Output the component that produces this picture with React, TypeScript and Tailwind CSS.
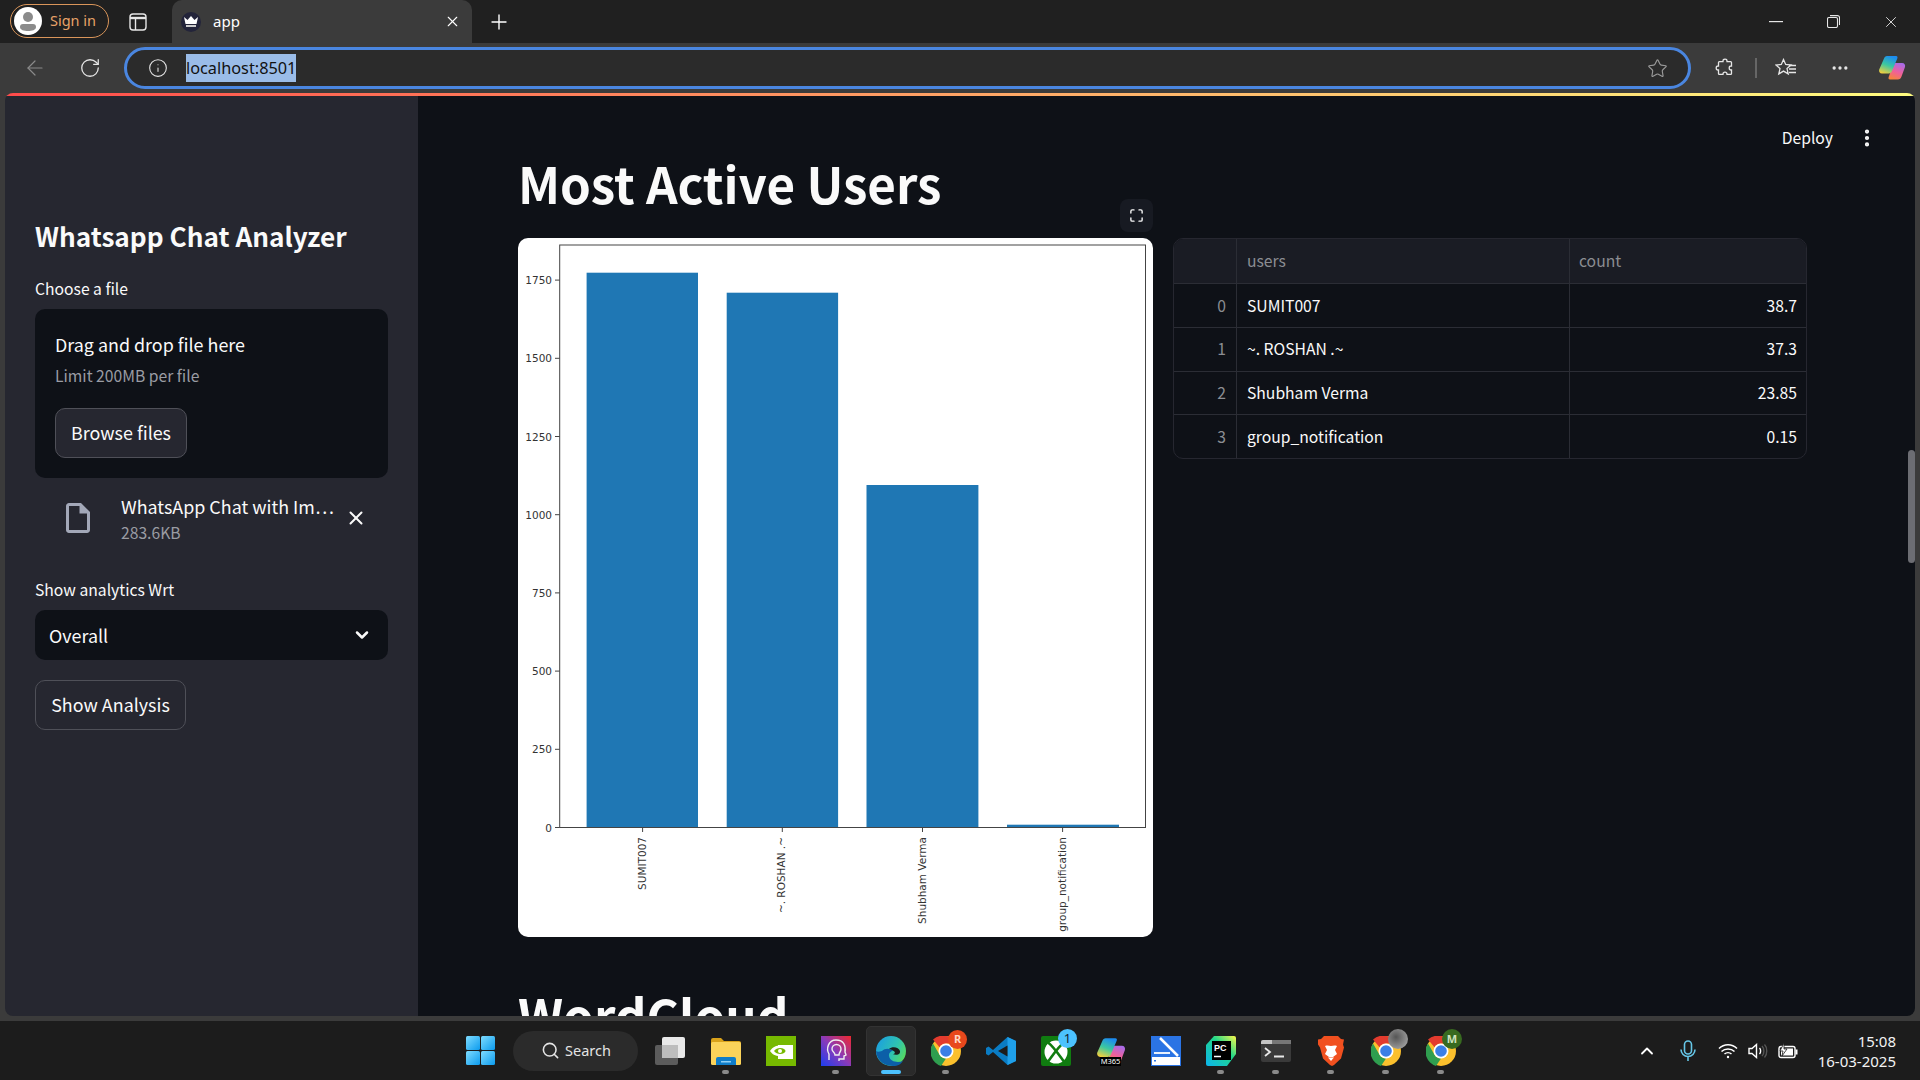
import React from "react";
import { ArrowLeft, ChevronDown, ChevronUp, Info, Maximize, MoreVertical, MoreHorizontal, Plus, RotateCw, Search, Star, X } from "lucide-react";

const appFont = "font-['Noto_Sans_CJK_SC','Noto_Sans',sans-serif]";

const rows = [
  { idx: 0, user: "SUMIT007", count: "38.7" },
  { idx: 1, user: "~. ROSHAN .~", count: "37.3" },
  { idx: 2, user: "Shubham Verma", count: "23.85" },
  { idx: 3, user: "group_notification", count: "0.15" },
];

const bars = [
  { x: 68.6, top: 34.7, w: 111.4, label: "SUMIT007", tick: 124.6 },
  { x: 208.7, top: 54.7, w: 111.4, label: "~. ROSHAN .~", tick: 264.3 },
  { x: 348.5, top: 247, w: 111.9, label: "Shubham Verma", tick: 404.5 },
  { x: 489, top: 586.7, w: 112, label: "group_notification", tick: 544.6 },
];

const yTicks = [0, 250, 500, 750, 1000, 1250, 1500, 1750];

const BarChart = () => (
  <svg width="635" height="699" viewBox="0 0 635 699" className="block">
    {bars.map((b) => (
      <rect key={b.label} x={b.x} y={b.top} width={b.w} height={589.5 - b.top} fill="#1f77b4" />
    ))}
    <rect x="41.7" y="7" width="585.8" height="582.5" fill="none" stroke="#444" strokeWidth="1" />
    {yTicks.map((t) => {
      const y = 589.5 - (t / 250) * 78.2;
      return (
        <g key={t}>
          <line x1="37" x2="41.7" y1={y} y2={y} stroke="#444" />
          <text x="34" y={y + 4} textAnchor="end" fontSize="10.5" fill="#333" fontFamily="DejaVu Sans, sans-serif">
            {t}
          </text>
        </g>
      );
    })}
    {bars.map((b) => (
      <g key={b.label}>
        <line x1={b.tick} x2={b.tick} y1="589.5" y2="594" stroke="#444" />
        <text
          transform={`translate(${b.tick + 3} 599) rotate(-90)`}
          textAnchor="end"
          fontSize="10.5"
          fill="#333"
          fontFamily="DejaVu Sans, sans-serif"
        >
          {b.label}
        </text>
      </g>
    ))}
  </svg>
);

const DataTable = () => (
  <div className="w-[634px] self-start rounded-[10px] border border-[#262730] overflow-hidden text-[15.7px] bg-[#0e1117]">
    <div className="grid grid-cols-[63px_333px_1fr] h-[44px] bg-[#1a1c24] text-[#8b8d92]">
      <div className="border-r border-[#2b2d35]" />
      <div className="border-r border-[#2b2d35] px-[10px] flex items-center">users</div>
      <div className="px-[9px] flex items-center">count</div>
    </div>
    {rows.map((r) => (
      <div key={r.idx} className="grid grid-cols-[63px_333px_1fr] h-[43.75px] border-t border-[#2b2d35] text-[#fafafa]">
        <div className="border-r border-[#2b2d35] px-[10px] flex items-center justify-end text-[#8b8d92]">{r.idx}</div>
        <div className="border-r border-[#2b2d35] px-[10px] flex items-center">{r.user}</div>
        <div className="px-[9px] flex items-center justify-end">{r.count}</div>
      </div>
    ))}
  </div>
);

const Sidebar = () => (
  <aside className="w-[413px] shrink-0 bg-[#262730] px-[30px] pt-[122px] text-[#fafafa]">
    <h2 className="text-[26.2px] leading-[36px] font-semibold whitespace-nowrap">Whatsapp Chat Analyzer</h2>
    <p className="mt-[22px] mb-[8px] text-[15.7px] leading-[25px]">Choose a file</p>
    <div className="h-[169px] rounded-[10px] bg-[#0e1117] px-[20px] pt-[21px]">
      <p className="text-[17.9px] leading-[28px]">Drag and drop file here</p>
      <p className="mt-[6px] text-[15.7px] leading-[24px] text-[#9a9ca3]">Limit 200MB per file</p>
      <button className="mt-[20px] h-[50px] w-[132px] rounded-[10px] border border-[#4f5058] bg-[#262730] pb-[2px] text-[17.9px]">
        Browse files
      </button>
    </div>
    <div className="flex items-center h-[80px] pl-[25px]">
      <svg width="36" height="36" viewBox="0 0 24 24" fill="#a3a8b8" className="shrink-0">
        <path d="M14 2H6c-1.1 0-1.99.9-1.99 2L4 20c0 1.1.89 2 1.99 2H18c1.1 0 2-.9 2-2V8l-6-6zM6 20V4h7v5h5v11H6z" />
      </svg>
      <div className="ml-[25px] w-[222px]">
        <p className="text-[17.9px] leading-[28px] whitespace-nowrap">WhatsApp Chat with Im…</p>
        <p className="text-[15.7px] leading-[25px] text-[#9a9ca3]">283.6KB</p>
      </div>
      <X size={22} strokeWidth={2.2} className="ml-[2px]" />
    </div>
    <p className="mt-[19px] mb-[8px] text-[15.7px] leading-[25px]">Show analytics Wrt</p>
    <div className="h-[50px] rounded-[10px] bg-[#0e1117] pl-[14px] pr-[16px] flex items-center justify-between text-[17.9px]">
      Overall
      <ChevronDown size={20} strokeWidth={3} />
    </div>
    <button className="mt-[20px] h-[50px] w-[151px] rounded-[10px] border border-[#4f5058] bg-[#262730] pb-[2px] text-[17.9px]">
      Show Analysis
    </button>
  </aside>
);

const MainPane = () => (
  <main className="relative flex-1 min-w-0 overflow-hidden bg-[#0e1117] pl-[100px] pt-[54px] text-[#fafafa]">
    <h1 className="text-[49.3px] leading-[66px] font-bold">Most Active Users</h1>
    <div className="mt-[22px] flex gap-[20px]">
      <div className="relative w-[635px] h-[699px] rounded-[10px] bg-white">
        <button className="absolute -top-[39px] right-0 w-[33px] h-[33px] flex items-center justify-center rounded-[8px] bg-[#171a22] text-[#fafafa]">
          <Maximize size={15} strokeWidth={2.2} />
        </button>
        <BarChart />
      </div>
      <DataTable />
    </div>
    <h1 className="mt-[45px] text-[49.3px] leading-[66px] font-bold">WordCloud</h1>
    <div className="absolute top-[30px] right-[37px] flex items-center gap-[23px] text-[15.7px]">
      <span>Deploy</span>
      <MoreVertical size={22} strokeWidth={2.6} />
    </div>
    <div className="absolute right-0 top-[354px] w-[7px] h-[113px] rounded-full bg-[#6c6d73]" />
  </main>
);

const SidebarToggleIcon = () => (
  <svg width="18" height="18" viewBox="0 0 18 18" fill="none" stroke="#e6e6e6" strokeWidth="1.4">
    <rect x="1" y="1" width="16" height="16" rx="3" />
    <path d="M1 5h16" strokeWidth="2.4" />
    <path d="M6.5 5v12" />
  </svg>
);

const PuzzleIcon = () => (
  <svg width="20" height="20" viewBox="0 0 20 20" fill="none" stroke="#e6e6e6" strokeWidth="1.3">
    <path d="M8 3c0-2.4 4-2.4 4 0v.6h3.6a1 1 0 0 1 .9 1V8H16c-2.4 0-2.4 4 0 4h.5v3.4a1 1 0 0 1-.9 1H12v-.4c0-2.6-4-2.6-4 0v.4H4.4a1 1 0 0 1-.9-1V12H3c-2.4 0-2.4-4 0-4h.5V4.600a1 1 0 0 1 .9-1H8z" />
  </svg>
);

const FavListIcon = () => (
  <svg width="22" height="20" viewBox="0 0 22 20" fill="none" stroke="#e6e6e6" strokeWidth="1.3">
    <path d="M8.500 1.500l2.200 5 5.300.5-4 3.600 1.200 5.300-4.700-2.800-4.700 2.800 1.200-5.300-4-3.600 5.300-.5z" />
    <path d="M14 7.500h7M14 11h7M14 14.500h7" />
  </svg>
);

const CopilotIcon = ({ size = 28 }: { size?: number }) => (
  <svg width={size} height={size} viewBox="0 0 28 28">
    <defs>
      <linearGradient id="cpA" x1="0.6" y1="0" x2="0.2" y2="1">
        <stop offset="0" stopColor="#1c8cf0" />
        <stop offset="0.5" stopColor="#3cc8a0" />
        <stop offset="1" stopColor="#f5cf3c" />
      </linearGradient>
      <linearGradient id="cpB" x1="0.7" y1="0" x2="0.3" y2="1">
        <stop offset="0" stopColor="#a86be8" />
        <stop offset="0.55" stopColor="#f0609a" />
        <stop offset="1" stopColor="#f7843c" />
      </linearGradient>
    </defs>
    <path d="M17 9h7c2.500 0 3.500 2 3 4l-3.500 9.500c-.6 1.800-1.700 3-3.700 3H12c-1.500 0-1.800-1-1.300-2.500L15 11c.4-1.200 1-2 2-2z" fill="url(#cpB)" />
    <path d="M9 2h9c1.500 0 1.800 1 1.300 2.500L14 17c-.6 1.600-1.500 2.500-3.200 2.500H4C1.800 19.500.6 17.500 1.200 15.500L6 4.500C6.500 3 7.500 2 9 2z" fill="url(#cpA)" />
  </svg>
);

const ChromeIcon = () => (
  <svg width="30" height="30" viewBox="0 0 30 30">
    <circle cx="15" cy="15" r="15" fill="#fbc02d" />
    <path d="M15 0a15 15 0 0 1 13 7.500H15a7.500 7.500 0 0 0-6.500 3.750L2 3.600A15 15 0 0 1 15 0z" fill="#e33b2e" />
    <path d="M2 7.500l6.500 11.250a7.500 7.500 0 0 0 6.500 3.750L10 30A15 15 0 0 1 2 7.500z" fill="#2f9e4f" />
    <circle cx="15" cy="15" r="7.500" fill="#fff" />
    <circle cx="15" cy="15" r="5.800" fill="#3b7fe6" />
  </svg>
);

const EdgeIcon = () => (
  <svg width="30" height="30" viewBox="0 0 30 30">
    <defs>
      <linearGradient id="edgeA" x1="0" y1="0.2" x2="1" y2="0.7">
        <stop offset="0" stopColor="#1b9fe0" />
        <stop offset="0.6" stopColor="#2fc3b0" />
        <stop offset="1" stopColor="#5adc5a" />
      </linearGradient>
    </defs>
    <circle cx="15" cy="15" r="15" fill="url(#edgeA)" />
    <path d="M0 15C1 26 10 30 17 30c5 0 8-2 10-5-5 2-13 1-14-5-.5-3 2-5 4-5-3-3-8-3-11 0-3 1-5 1-6 0z" fill="#0c5fa8" />
    <path d="M13 13c3-3 10-2 11 2 .3 1.500-.5 3-2 3.500-1.500.5-3.500.3-5-.2 2-.3 2.500-2 1-3-1.500-1.200-3.500-2.300-5-2.300z" fill="#1c1c1c" />
  </svg>
);

const TaskIcon = ({ children, dot }: { children: React.ReactNode; dot?: boolean }) => (
  <div className="relative w-[55px] h-[59px] flex items-center justify-center shrink-0">
    {children}
    {dot && <span className="absolute bottom-[6px] w-[7px] h-[4px] rounded-full bg-[#8a8a8a]" />}
  </div>
);

const Taskbar = () => (
  <footer className="relative h-[59px] shrink-0 bg-[#1c1c1c] flex items-center text-white font-['Noto_Sans',sans-serif]">
    <div className="ml-[466px] mr-[18px] shrink-0">
      <svg width="29" height="29" viewBox="0 0 29 29">
        <defs>
          <linearGradient id="winA" x1="0" y1="0" x2="1" y2="1">
            <stop offset="0" stopColor="#7fdcff" />
            <stop offset="1" stopColor="#0b9bee" />
          </linearGradient>
        </defs>
        <rect x="0" y="0" width="14" height="14" rx="1.500" fill="url(#winA)" />
        <rect x="15" y="0" width="14" height="14" rx="1.500" fill="url(#winA)" />
        <rect x="0" y="15" width="14" height="14" rx="1.500" fill="url(#winA)" />
        <rect x="15" y="15" width="14" height="14" rx="1.500" fill="url(#winA)" />
      </svg>
    </div>
    <div className="w-[125px] h-[40px] rounded-full bg-[#2b2b2b] flex items-center pl-[28px] gap-[5px] text-[14.5px] text-[#e4e4e4] mr-[5px] shrink-0">
      <Search size={19} strokeWidth={2} />
      Search
    </div>
    {/* task view */}
    <TaskIcon>
      <svg width="31" height="28" viewBox="0 0 31 28">
        <rect x="0" y="8" width="23" height="20" rx="2" fill="#5c5c5c" />
        <rect x="7" y="0" width="23" height="21" rx="2" fill="#e9e9e9" />
        <rect x="7" y="8" width="16" height="13" fill="#bdbdbd" />
      </svg>
    </TaskIcon>
    {/* file explorer */}
    <TaskIcon dot>
      <svg width="30" height="28" viewBox="0 0 30 28">
        <path d="M0 3a2 2 0 0 1 2-2h8l3 3h15a2 2 0 0 1 2 2v4H0z" fill="#d9a21b" />
        <rect x="0" y="5" width="30" height="23" rx="1.500" fill="#fbd35a" />
        <path d="M5 28v-6a2 2 0 0 1 2-2h16a2 2 0 0 1 2 2v6z" fill="#0f7dc9" />
        <rect x="10" y="24" width="10" height="1.500" fill="#8fd0f5" />
      </svg>
    </TaskIcon>
    {/* nvidia */}
    <TaskIcon>
      <svg width="30" height="30" viewBox="0 0 30 30">
        <rect width="30" height="30" fill="#76b900" />
        <path d="M12 9h15v14H12z" fill="#fff" />
        <path d="M4 15c3-5 10-7 14-5 3 1 5 3 6 5-2 3-6 5-10 5-5 0-8-2-10-5z" fill="#fff" />
        <path d="M8 15c2-3 7-4 10-2 2 1 2 3 0 4-3 2-8 1-10-2z" fill="#76b900" />
        <circle cx="14" cy="15" r="2" fill="#fff" />
      </svg>
    </TaskIcon>
    {/* head logo app */}
    <TaskIcon dot>
      <svg width="30" height="30" viewBox="0 0 30 30">
        <defs>
          <linearGradient id="appA" x1="0" y1="1" x2="1" y2="0">
            <stop offset="0" stopColor="#1b3ff0" />
            <stop offset="0.5" stopColor="#8a3ab9" />
            <stop offset="1" stopColor="#f0282e" />
          </linearGradient>
        </defs>
        <rect width="30" height="30" fill="url(#appA)" />
        <path d="M8 24v-6c-3-5-1-14 7-14s10 6 9 12l1 3-2 1v3h-5v2" fill="none" stroke="#eee" strokeWidth="1.400" />
        <path d="M11 13a4.500 4.500 0 1 1 9 0c0 3-2 3-2 6h-4c0-3-3-3-3-6z" fill="none" stroke="#eee" strokeWidth="1.400" />
      </svg>
    </TaskIcon>
    {/* edge, active */}
    <div className="relative w-[50px] h-[50px] mx-[2.5px] rounded-[5px] bg-[#2a2a2a] border border-[#333] flex items-center justify-center shrink-0">
      <EdgeIcon />
      <span className="absolute bottom-[1px] w-[20px] h-[4px] rounded-full bg-[#4cc2ff]" />
    </div>
    <TaskIcon dot>
      <ChromeIcon />
      <span className="absolute top-[9px] right-[6px] w-[19px] h-[19px] rounded-full bg-[#e8481c] flex items-center justify-center text-[11px] font-bold text-[#ffd9c8]">
        R
      </span>
    </TaskIcon>
    {/* vs code */}
    <TaskIcon>
      <svg width="30" height="30" viewBox="0 0 30 30">
        <path d="M21.500 1L30 5v20l-8.500 4L7 16l-4.500 3.500L0 18V12l2.500-1.500L7 14z" fill="#0a7cc4" />
        <path d="M21.500 1L30 5v20l-8.500 4z" fill="#1fa0ea" />
        <path d="M21.500 9.500L12 15l9.500 5.500z" fill="#1c1c1c" />
      </svg>
    </TaskIcon>
    {/* xbox */}
    <TaskIcon>
      <svg width="30" height="30" viewBox="0 0 30 30">
        <rect width="30" height="30" rx="2" fill="#107c10" />
        <circle cx="15" cy="16" r="11.500" fill="#fff" />
        <path d="M7 6.500C13 11 18 19 24 27M23 6.500C17 11 12 19 6 27" fill="none" stroke="#107c10" strokeWidth="2.600" />
      </svg>
      <span className="absolute top-[8px] right-[6px] w-[19px] h-[19px] rounded-full bg-[#4cc2ff] flex items-center justify-center text-[13px] text-[#102030]">
        1
      </span>
    </TaskIcon>
    {/* m365 */}
    <TaskIcon>
      <CopilotIcon size={30} />
      <span className="absolute top-[36px] left-[17px] w-[21px] h-[9px] bg-black text-[7.5px] leading-[9px] text-center text-white">
        M365
      </span>
    </TaskIcon>
    {/* scanner */}
    <TaskIcon>
      <svg width="30" height="30" viewBox="0 0 30 30">
        <rect width="30" height="30" fill="#2b74e4" />
        <path d="M9 2l18 18" stroke="#fff" strokeWidth="2.500" />
        <path d="M3 17h16" stroke="#fff" strokeWidth="1.800" />
        <rect x="1" y="21" width="28" height="8" fill="#fff" />
        <rect x="3" y="24" width="2" height="1.500" fill="#2b74e4" />
      </svg>
    </TaskIcon>
    {/* pycharm */}
    <TaskIcon dot>
      <svg width="30" height="30" viewBox="0 0 30 30">
        <defs>
          <linearGradient id="pcA" x1="0" y1="1" x2="1" y2="0">
            <stop offset="0" stopColor="#0bb4ee" />
            <stop offset="0.6" stopColor="#21d789" />
            <stop offset="1" stopColor="#fcf84a" />
          </linearGradient>
        </defs>
        <path d="M8 0h20a2 2 0 0 1 2 2v16l-9 12H2a2 2 0 0 1-2-2V9z" fill="url(#pcA)" />
        <rect x="6" y="5" width="19" height="19" fill="#000" />
        <path d="M8 20.500h7" stroke="#fff" strokeWidth="1.500" />
        <text x="8" y="15" fontSize="9" fontWeight="700" fill="#fff" fontFamily="Liberation Sans, sans-serif">PC</text>
      </svg>
    </TaskIcon>
    {/* terminal */}
    <TaskIcon dot>
      <svg width="30" height="22" viewBox="0 0 30 22">
        <rect width="30" height="22" rx="2" fill="#3a3a3a" />
        <path d="M2 0h9v4H0V2a2 2 0 0 1 2-2z" fill="#c4c4c4" />
        <rect x="11" y="0" width="19" height="4" fill="#777" />
        <path d="M4 8l5 4-5 4" fill="none" stroke="#e8e8e8" strokeWidth="1.800" />
        <path d="M13 16.500h10" stroke="#e8e8e8" strokeWidth="2" />
      </svg>
    </TaskIcon>
    {/* brave */}
    <TaskIcon dot>
      <svg width="26" height="30" viewBox="0 0 26 30">
        <path d="M6 0h14l3 3 3 .5-1 5 1 3-3 11-7 6.500-2 1-2-1L5 22.500 2 11.500 0 8.500 0 3.500 3 3z" fill="#f1501f" />
        <path d="M7 10c3-1 4 0 6 0s3-1 6 0l-2 4 2 4-4 3h-4l-4-3 2-4z" fill="#fff" />
        <path d="M10 21.500h6L13 25z" fill="#fff" />
      </svg>
    </TaskIcon>
    <TaskIcon dot>
      <ChromeIcon />
      <span className="absolute top-[8px] right-[5px] w-[20px] h-[20px] rounded-full bg-[radial-gradient(circle_at_40%_40%,#555,#b5b5b5)]" />
    </TaskIcon>
    <TaskIcon dot>
      <ChromeIcon />
      <span className="absolute top-[8px] right-[6px] w-[20px] h-[20px] rounded-full bg-[#386a20] flex items-center justify-center text-[11px] font-bold text-[#cfe3bf]">
        M
      </span>
    </TaskIcon>

    <div className="ml-auto flex items-center pr-[24px]">
      <ChevronUp size={20} strokeWidth={2.2} className="mr-[23px]" />
      <svg width="16" height="22" viewBox="0 0 16 22" fill="none" stroke="#66c7e8" strokeWidth="1.600" className="mr-[22px]">
        <rect x="4.500" y="1" width="7" height="13" rx="3.500" />
        <path d="M1 9.500a7 7 0 0 0 14 0M8 16.500V21" />
      </svg>
      <svg width="20" height="16" viewBox="0 0 20 16" fill="none" stroke="#fff" strokeWidth="1.500" className="mr-[10px]">
        <path d="M1 5.500c5-5 13-5 18 0M3.500 8.500c3.500-3.500 9.500-3.500 13 0M6.500 11c2-1.800 5-1.800 7 0" />
        <circle cx="10" cy="14" r="1.200" fill="#fff" stroke="none" />
      </svg>
      <svg width="20" height="16" viewBox="0 0 20 16" fill="none" stroke="#fff" strokeWidth="1.400" className="mr-[10px]">
        <path d="M1 5.500h3L8.500 1.500v13L4 10.500H1z" />
        <path d="M11.500 5c1.500 1.500 1.500 4.500 0 6" />
        <path d="M14 3c2.500 2.500 2.500 7.500 0 10M16.500 1.500c3 3 3 10 0 13" stroke="#555" />
      </svg>
      <svg width="20" height="16" viewBox="0 0 20 16" className="mr-[20px]">
        <rect x="1" y="3.500" width="16" height="11" rx="2" fill="none" stroke="#fff" strokeWidth="1.400" />
        <rect x="3" y="5.500" width="12" height="7" fill="#fff" />
        <rect x="17.500" y="6.500" width="2" height="5" fill="#fff" />
        <path d="M6 0L2 8h3l-1 5 5-7H6z" fill="#fff" stroke="#1c1c1c" strokeWidth="0.800" />
      </svg>
      <div className="text-right text-[15px] leading-[20px] text-[#f3f3f3]">
        <div>15:08</div>
        <div>16-03-2025</div>
      </div>
    </div>
  </footer>
);

export default function App() {
  return (
    <div className="w-[1920px] h-[1080px] overflow-hidden flex flex-col bg-[#3b3b3b]">
      <div className="h-[43px] shrink-0 bg-[#202020] flex items-end pl-[10px] text-white font-['Noto_Sans',sans-serif]">
        <div className="mb-[5px] w-[99px] h-[34px] rounded-full border border-[#d9955a] flex items-center pl-[3px] gap-[8px] text-[14.5px] text-[#e8a268]">
          <svg width="28" height="28" viewBox="0 0 28 28" className="shrink-0">
            <circle cx="14" cy="14" r="14" fill="#fff" />
            <circle cx="14" cy="10" r="5" fill="#8b8b8b" />
            <path d="M6 20a3 3 0 0 1 3-3h10a3 3 0 0 1 3 3c0 3-4 4-8 4s-8-1-8-4z" fill="#8b8b8b" />
          </svg>
          Sign in
        </div>
        <div className="w-[59px] pr-[2px] h-full flex items-center justify-center">
          <SidebarToggleIcon />
        </div>
        <div className="ml-[4px] w-[300px] h-full rounded-t-[10px] bg-[#3b3b3b] flex items-center pl-[9px] pr-[11px] text-[15px]">
          <span className="w-[20px] h-[20px] rounded-full bg-[#23243a] flex items-center justify-center mr-[12px]">
            <svg width="14" height="11" viewBox="0 0 14 11">
              <path d="M0 1l3.500 3L7 0l3.500 4L14 1l-1.500 7h-11z" fill="#fff" />
              <rect x="2" y="9" width="10" height="2" fill="#ccc" />
            </svg>
          </span>
          app
          <X size={17} strokeWidth={1.6} className="ml-auto" />
        </div>
        <div className="h-full flex items-center ml-[15px]">
          <Plus size={24} strokeWidth={1.4} />
        </div>
        <div className="ml-auto h-full flex items-center text-[#e6e6e6]">
          <svg width="14" height="2" viewBox="0 0 14 2" className="mr-[44px]"><rect width="14" height="1.200" fill="#e6e6e6" /></svg>
          <svg width="13" height="13" viewBox="0 0 13 13" fill="none" stroke="#e6e6e6" strokeWidth="1.100" className="mr-[42px]">
            <rect x="0.500" y="2.500" width="10" height="10" rx="1.500" />
            <path d="M3 0.600h7.500a2 2 0 0 1 2 2V10" />
          </svg>
          <X size={18} strokeWidth={1.2} className="mr-[20px]" />
        </div>
      </div>

      <div className="h-[50px] shrink-0 bg-[#3b3b3b] flex items-center text-[#e6e6e6] font-['Noto_Sans',sans-serif]">
        <ArrowLeft size={24} strokeWidth={1.2} className="ml-[23px] text-[#8a8a8a]" />
        <RotateCw size={22} strokeWidth={1.4} className="ml-[32px]" />
        <div className="ml-[23px] w-[1567px] h-[42px] rounded-full border-[3px] border-[#4a86e0] bg-[#2b2b2b] flex items-center pl-[21px] pr-[20px]">
          <Info size={20} strokeWidth={1.3} />
          <span className="ml-[18px] h-[28px] leading-[28px] bg-[#9abce8] text-[#111] text-[16.3px]">localhost:8501</span>
          <Star size={21} strokeWidth={1.3} className="ml-auto text-[#9a9a9a]" />
        </div>
        <div className="ml-[24px]"><PuzzleIcon /></div>
        <div className="ml-[20px] w-[1.5px] h-[20px] bg-[#666]" />
        <div className="ml-[18px]"><FavListIcon /></div>
        <MoreHorizontal size={20} strokeWidth={2} className="ml-[33px]" />
        <div className="ml-[28px]"><CopilotIcon /></div>
      </div>

      <div className={`mx-[5px] mb-[5px] flex-1 min-h-0 rounded-[8px] overflow-hidden flex flex-col ${appFont}`}>
        <div className="h-[3px] shrink-0 bg-[linear-gradient(90deg,#ff4b4b,#fffd80)]" />
        <div className="flex-1 min-h-0 flex">
          <Sidebar />
          <MainPane />
        </div>
      </div>

      <Taskbar />
    </div>
  );
}
